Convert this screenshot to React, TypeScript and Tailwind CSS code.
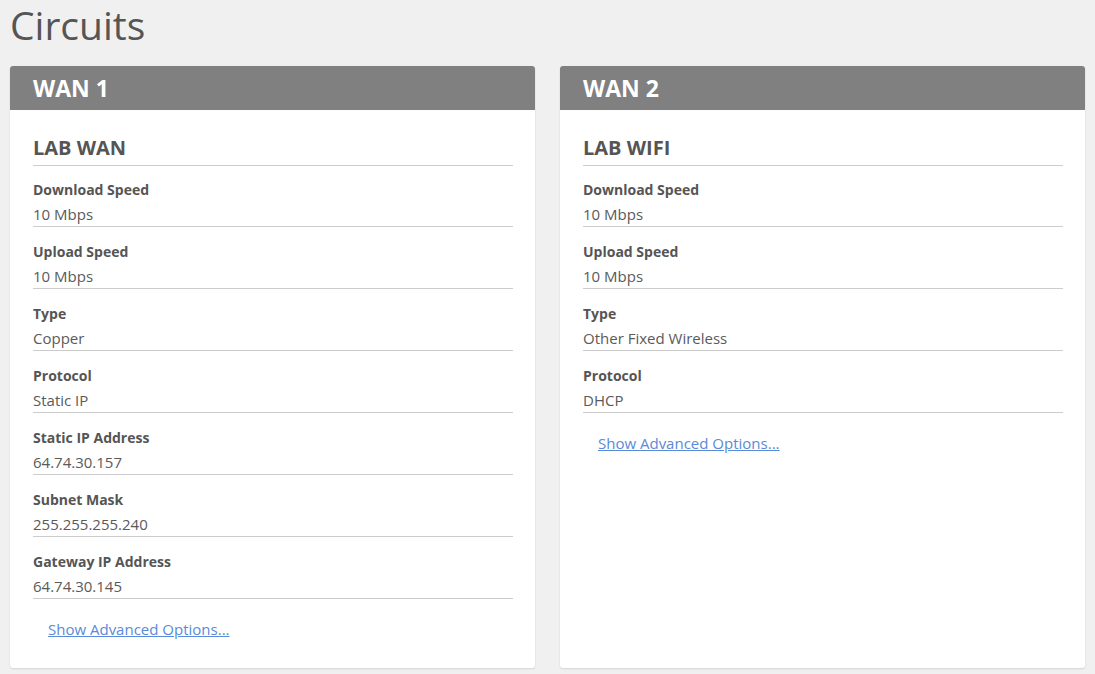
import React from 'react';

interface Field {
  label: string;
  value: string;
}

interface Circuit {
  wan: string;
  name: string;
  fields: Field[];
}

const circuits: Circuit[] = [
  {
    wan: 'WAN 1',
    name: 'LAB WAN',
    fields: [
      { label: 'Download Speed', value: '10 Mbps' },
      { label: 'Upload Speed', value: '10 Mbps' },
      { label: 'Type', value: 'Copper' },
      { label: 'Protocol', value: 'Static IP' },
      { label: 'Static IP Address', value: '64.74.30.157' },
      { label: 'Subnet Mask', value: '255.255.255.240' },
      { label: 'Gateway IP Address', value: '64.74.30.145' },
    ],
  },
  {
    wan: 'WAN 2',
    name: 'LAB WIFI',
    fields: [
      { label: 'Download Speed', value: '10 Mbps' },
      { label: 'Upload Speed', value: '10 Mbps' },
      { label: 'Type', value: 'Other Fixed Wireless' },
      { label: 'Protocol', value: 'DHCP' },
    ],
  },
];

function CircuitCard(props: { circuit: Circuit }) {
  const { circuit } = props;
  return (
    <div className="flex-1 bg-white rounded-[3px] shadow-[0_1px_2px_rgba(0,0,0,0.12)] overflow-hidden">
      <div className="h-[44px] bg-[#808080] px-[23px] flex items-center">
        <h2 className="text-[23px] leading-[30px] font-bold text-white">{circuit.wan}</h2>
      </div>
      <div className="pt-[24px] pb-[29px] pl-[23px] pr-[22px]">
        <div className="text-[20px] leading-[28px] font-bold pb-[3px] border-b border-[#cccccc]">
          {circuit.name}
        </div>
        {circuit.fields.map((f, i) => (
          <div
            key={f.label}
            className={
              (i === 0 ? 'pt-[14px]' : 'pt-[15px]') +
              ' pb-[2px] border-b border-[#cccccc]'
            }
          >
            <div className="text-[14px] leading-[20px] font-bold">{f.label}</div>
            <div className="text-[15px] leading-[20px] mt-[4px] text-[#5a5a5a]">{f.value}</div>
          </div>
        ))}
        <div className="mt-[20px] ml-[15px] text-[15px] leading-[20px]">
          <a href="#" className="text-[#5a8ad8] underline">
            Show Advanced Options...
          </a>
        </div>
      </div>
    </div>
  );
}

export default function App() {
  return (
    <div
      className="min-h-screen bg-[#f0f0f0] text-[#555555] px-[10px] pb-[7px]"
      style={{ fontFamily: '"Open Sans", "Liberation Sans", sans-serif' }}
    >
      <h1 className="text-[39px] leading-[50px] h-[66px] font-normal">Circuits</h1>
      <div className="flex gap-[25px] items-stretch">
        {circuits.map((c) => (
          <CircuitCard key={c.wan} circuit={c} />
        ))}
      </div>
    </div>
  );
}
